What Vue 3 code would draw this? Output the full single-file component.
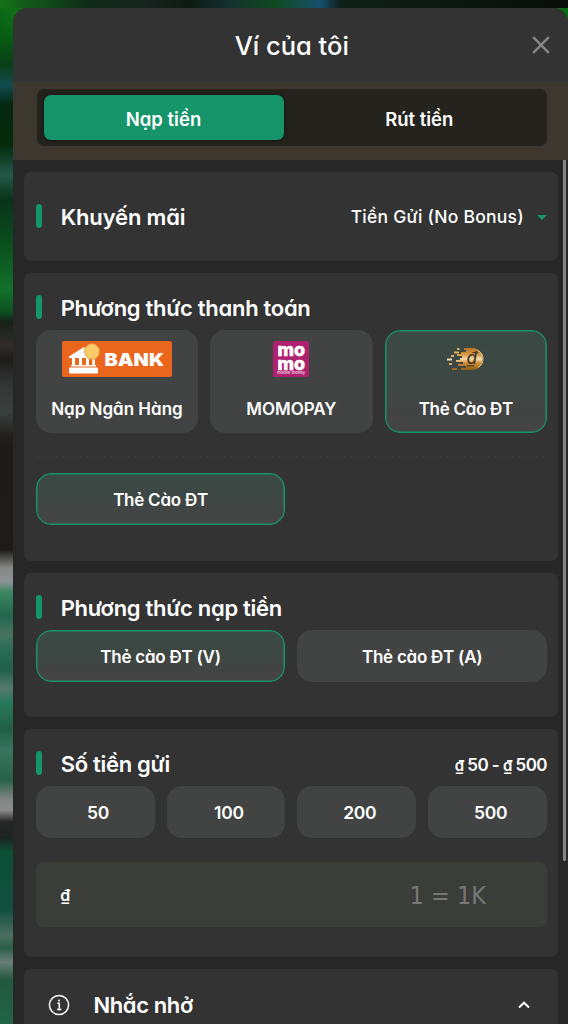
<template>
  <div class="page">
    <div class="wallet">
      <header class="wallet-header">
        <h1 class="wallet-title">Ví của tôi</h1>
        <button class="close-btn" aria-label="Đóng">
          <svg width="20" height="20" viewBox="0 0 20 20">
            <path d="M2.200 2.200L17.800 17.800M17.800 2.200L2.200 17.800" />
          </svg>
        </button>
      </header>

      <div class="tabs-wrap">
        <div class="tabs">
          <button
            v-for="tab in tabs"
            :key="tab"
            :class="['tab', { 'tab-active': tab === activeTab }]"
            @click="activeTab = tab"
          >
            <span>{{ tab }}</span>
          </button>
        </div>
      </div>

      <main class="wallet-body">
        <section class="card card-promo">
          <div class="card-head">
            <h2 class="card-title">Khuyến mãi</h2>
            <div class="promo-select">
              <span>Tiền Gửi (No Bonus)</span>
              <i class="caret"></i>
            </div>
          </div>
        </section>

        <section class="card card-payment">
          <div class="card-head">
            <h2 class="card-title">Phương thức thanh toán</h2>
          </div>
          <div class="grid grid-3">
            <button
              v-for="method in methods"
              :key="method.id"
              :class="['option', 'method', { 'option-active': method.id === activeMethod }]"
              @click="activeMethod = method.id"
            >
              <svg v-if="method.id === 'bank'" class="logo" width="110" height="36" viewBox="0 0 110 36">
                <rect width="110" height="36" rx="2" fill="#e9661c" />
                <g fill="#fff">
                  <path d="M7 15.500L22 6L31 15.500V17H7Z" />
                  <rect x="10" y="17" width="3" height="8" />
                  <rect x="17" y="17" width="3" height="8" />
                  <rect x="24" y="17" width="3" height="8" />
                  <rect x="30.300" y="17" width="2.600" height="8" />
                  <rect x="9" y="24" width="25" height="1.500" />
                  <rect x="7" y="26.500" width="29" height="6" rx="1" />
                </g>
                <ellipse cx="30" cy="10.500" rx="7.500" ry="7.800" fill="#fccb6c" stroke="#e5953a" stroke-width="0.800" />
                <text class="logo-bank" x="42.500" y="25.300" textLength="59.500" lengthAdjust="spacingAndGlyphs">BANK</text>
              </svg>

              <svg v-else-if="method.id === 'momo'" class="logo" width="36" height="36" viewBox="0 0 36 36">
                <rect width="36" height="36" rx="2.500" fill="#ae2070" />
                <text class="logo-momo" x="4.500" y="15.200" textLength="27.500" lengthAdjust="spacingAndGlyphs">mo</text>
                <text class="logo-momo" x="4.500" y="28.600" textLength="27.500" lengthAdjust="spacingAndGlyphs">mo</text>
                <text class="logo-momo-sub" x="4" y="33.200" textLength="28" lengthAdjust="spacingAndGlyphs">mobile money</text>
              </svg>

              <svg v-else class="logo" width="38" height="36" viewBox="0 0 38 36">
                <defs>
                  <linearGradient id="coin" x1="0" y1="0" x2="0" y2="1">
                    <stop offset="0" stop-color="#b87224" />
                    <stop offset="0.300" stop-color="#d99a47" />
                    <stop offset="0.500" stop-color="#f6dcae" />
                    <stop offset="0.680" stop-color="#d18d35" />
                    <stop offset="1" stop-color="#8f5c18" />
                  </linearGradient>
                </defs>
                <path
                  fill="url(#coin)"
                  d="M17 7H27A10.500 11.200 0 0 1 27 29H14V27H19V25H11V23H16V21H9V19H13V17H15V15H10V13H14V11H19V9H17Z"
                />
                <g fill="#e0ab62">
                  <rect x="10" y="7" width="2.500" height="2" />
                  <rect x="7" y="10.500" width="5" height="2" />
                  <rect x="4" y="14" width="3" height="2" />
                  <rect x="0" y="17.500" width="5" height="2" fill="#f6dcae" />
                  <rect x="2" y="22" width="3" height="2" />
                  <rect x="5" y="27" width="5" height="2" fill="#a66b20" />
                </g>
                <path d="M31 9.500A9 9.500 0 0 1 31 26.500" fill="none" stroke="#efc27e" stroke-width="1" />
                <text class="logo-coin" x="19.500" y="22.500">đ</text>
                <path d="M20 24.800H27" stroke="#453a29" stroke-width="1.200" />
              </svg>
              <span class="method-name">{{ method.name }}</span>
            </button>
          </div>
          <div class="divider"></div>
          <div class="grid grid-2">
            <button class="option option-active"><span>Thẻ Cào ĐT</span></button>
          </div>
        </section>

        <section class="card card-deposit">
          <div class="card-head">
            <h2 class="card-title">Phương thức nạp tiền</h2>
          </div>
          <div class="grid grid-2">
            <button
              v-for="channel in channels"
              :key="channel"
              :class="['option', { 'option-active': channel === activeChannel }]"
              @click="activeChannel = channel"
            >
              <span>{{ channel }}</span>
            </button>
          </div>
        </section>

        <section class="card card-amount">
          <div class="card-head">
            <h2 class="card-title">Số tiền gửi</h2>
            <span class="range"><small>₫</small> 50 - <small>₫</small> 500</span>
          </div>
          <div class="grid grid-4">
            <button v-for="value in amounts" :key="value" class="option amount" @click="amount = value">
              <span>{{ value }}</span>
            </button>
          </div>
          <label class="amount-field">
            <span class="currency">₫</span>
            <input v-model="amount" class="amount-input" type="text" placeholder="1 = 1K" />
          </label>
        </section>

        <section class="card card-note">
          <svg class="info" width="22" height="22" viewBox="0 0 22 22">
            <circle cx="11" cy="11" r="9.600" />
            <path d="M9.300 9.300H11.300V15.300M9 15.500H13.400" />
            <circle class="info-dot" cx="11" cy="6.400" r="1" />
          </svg>
          <h2 class="note-title">Nhắc nhở</h2>
          <svg class="chevron" width="14" height="10" viewBox="0 0 14 10">
            <path d="M2 7.500L7 2.700L12 7.500" />
          </svg>
        </section>
      </main>

      <div class="scrollbar"></div>
    </div>
  </div>
</template>

<script setup>
import { ref } from 'vue';

const tabs = ['Nạp tiền', 'Rút tiền'];
const activeTab = ref('Nạp tiền');

const methods = [
  { id: 'bank', name: 'Nạp Ngân Hàng' },
  { id: 'momo', name: 'MOMOPAY' },
  { id: 'card', name: 'Thẻ Cào ĐT' }
];
const activeMethod = ref('card');

const channels = ['Thẻ cào ĐT (V)', 'Thẻ cào ĐT (A)'];
const activeChannel = ref('Thẻ cào ĐT (V)');

const amounts = [50, 100, 200, 500];
const amount = ref('');
</script>

<style>
body {
  margin: 0;
  overflow: hidden;
  background: #0d1712;
}
</style>

<style scoped>
* {
  box-sizing: border-box;
}

.page {
  height: 1024px;
  overflow: hidden;
  padding: 8px 0 0 12.5px;
  font-family: Inter, "Noto Sans", sans-serif;
  font-feature-settings: "cv11";
  color: #fff;
  background:
    linear-gradient(90deg, #167019 0, #12501c 40px, #0f2a18 90px, #17241f 140px, #0e1a13 190px, #15302f 230px, #0f4a20 275px, #17506d 320px, #0f2019 340px, #0c1710 460px, #080c0a 100%) 0 0 / 100% 8px no-repeat,
    radial-gradient(circle at 25px 15px, #167019 0, transparent 24px),
    linear-gradient(180deg, #0c7018 0, #075a12 40px, #0a3f18 65px, #124b50 85px, #04270f 105px, #032b0c 145px, #235848 175px, #07341a 200px, #0a4c1d 240px, #12702a 290px, #0c4f20 312px, #172019 322px, #302c29 345px, #1d1d1c 360px, #343635 385px, #3a403e 412px, #22211f 435px, #1d1b19 450px, #1d1c19 550px, #888 568px, #8b9292 582px, #3c8763 592px, #23664f 615px, #477362 635px, #286b55 650px, #21604a 670px, #557a6e 688px, #28785c 702px, #216047 730px, #38745f 750px, #28614b 780px, #858686 800px, #8b8b8b 810px, #252625 822px, #1c2420 838px, #0b4f37 852px, #12503e 910px, #4b6e61 935px, #285f49 948px, #6a7e78 962px, #22583e 980px, #216447 1024px);
}

.wallet {
  position: relative;
  height: 1016px;
  display: flex;
  flex-direction: column;
  overflow: hidden;
  border-radius: 15px 15px 0 0;
  background: #272727;
}

.wallet-header {
  display: grid;
  grid-template-columns: 54px 1fr 54px;
  align-items: center;
  flex: none;
  height: 74px;
  background: #333;
}

.wallet-title {
  grid-column: 2;
  margin: 2px 0 0 3px;
  text-align: center;
  font-size: 25.5px;
  font-weight: 450;
  line-height: 32px;
}

button {
  border: 0;
  padding: 0;
  background: none;
  color: inherit;
  font: inherit;
  font-feature-settings: inherit;
}

.close-btn {
  display: flex;
  margin-left: 17px;
}

.close-btn path {
  fill: none;
  stroke: #858585;
  stroke-width: 2.5;
}

.tabs-wrap {
  flex: none;
  height: 78px;
  padding: 7px 21px 14px 24px;
  background: #3c382f;
}

.tabs {
  display: grid;
  grid-template-columns: 240px 1fr;
  height: 57px;
  padding: 6px 7px;
  border-radius: 7px;
  background: #25231e;
}

.tab {
  font-size: 18.5px;
  font-weight: 560;
  line-height: 24px;
  padding-top: 3px;
  border-radius: 7px;
}

.tab:last-child {
  padding-left: 15px;
}

.tab-active {
  background: #16946a;
  box-shadow: 0 0 4px rgba(0, 0, 0, 0.5);
}

.wallet-body {
  display: flex;
  flex-direction: column;
  gap: 12px;
  padding: 12px 10px 0 11.5px;
}

.card {
  flex: none;
  padding: 12px 11px 0 11.7px;
  border-radius: 7px;
  background: #333;
}

.card-promo {
  height: 89px;
  padding-top: 21.5px;
}

.card-payment {
  height: 288px;
}

.card-deposit {
  height: 144px;
}

.card-amount {
  height: 228px;
}

.card-head {
  display: flex;
  align-items: center;
  height: 45px;
}

.card-head::before {
  content: "";
  width: 6px;
  height: 24px;
  margin-top: -1px;
  border-radius: 3px;
  background: #16946a;
}

.card-title {
  flex: 1;
  margin: 1px 0 0 19px;
  font-size: 22px;
  font-weight: 600;
  line-height: 28px;
  letter-spacing: -0.3px;
  white-space: nowrap;
}

.card-promo .card-title {
  letter-spacing: -0.15px;
}

.promo-select {
  display: flex;
  align-items: center;
  gap: 13px;
  padding-top: 2px;
  font-size: 17.5px;
  font-weight: 450;
  line-height: 24px;
  letter-spacing: 0.25px;
}

.caret {
  border: 5px solid transparent;
  border-top-color: #16946a;
  border-bottom: 0;
}

.grid {
  display: grid;
  gap: 12px;
}

.grid-2 {
  grid-template-columns: repeat(2, 1fr);
}

.grid-3 {
  grid-template-columns: repeat(3, 1fr);
}

.grid-4 {
  grid-template-columns: repeat(4, 1fr);
}

.option {
  height: 52px;
  padding-top: 2px;
  border: 1px solid transparent;
  border-radius: 15px;
  background: #424443;
  background-clip: border-box;
  font-size: 17px;
  font-weight: 580;
  line-height: 22px;
  letter-spacing: -0.25px;
  white-space: nowrap;
}

.option-active {
  border-color: #16946a;
  background: linear-gradient(180deg, #3a4943 0, #3d4844 40%, #424443 80%, #444 100%);
  box-shadow: inset 0 0 0 0.5px #16946a;
}

.method {
  display: flex;
  flex-direction: column;
  align-items: center;
  height: 103px;
  padding-top: 10px;
  letter-spacing: 0;
}

.method.option-active {
  letter-spacing: -0.3px;
}

.method-name {
  margin-top: 21px;
}

.logo {
  flex: none;
  letter-spacing: 0;
}

.logo-bank {
  fill: #fff;
  font-size: 18px;
  font-weight: 900;
}

.logo-momo {
  fill: #fff;
  stroke: #fff;
  stroke-width: 0.6;
  font-size: 18px;
  font-weight: 800;
}

.logo-momo-sub {
  fill: #e9bfd7;
  font-size: 4px;
  font-weight: 700;
}

.logo-coin {
  fill: #453a29;
  font-size: 17px;
  font-style: italic;
  font-weight: 500;
}

.divider {
  height: 40px;
  background: radial-gradient(circle, #383838 0.7px, transparent 1px) 0 22px / 6px 4px repeat-x;
}

.range {
  padding-top: 3px;
  font-size: 17px;
  font-weight: 600;
  line-height: 24px;
  letter-spacing: -0.55px;
}

.range small {
  font-size: 15px;
}

.amount {
  padding-left: 6px;
  font-size: 17.5px;
  font-weight: 600;
}

.amount-field {
  display: flex;
  align-items: center;
  height: 65px;
  margin-top: 24px;
  padding: 0 61px 0 24.5px;
  border-radius: 7px;
  background: #3b3d39;
}

.currency {
  font-size: 16px;
  font-weight: 600;
}

.amount-input {
  flex: 1;
  min-width: 0;
  padding: 3px 0 0;
  border: 0;
  outline: 0;
  background: none;
  color: #fff;
  font: 400 25px/32px "DejaVu Sans Condensed", "DejaVu Sans", sans-serif;
  text-align: right;
}

.amount-input::placeholder {
  color: #777;
}

.card-note {
  display: flex;
  align-items: center;
  height: 90px;
  padding: 0 27px 18px 24px;
}

.info {
  fill: none;
  stroke: #fff;
  stroke-width: 1.5;
}

.info-dot {
  fill: #fff;
  stroke: none;
}

.note-title {
  flex: 1;
  margin: 0 0 0 23.5px;
  font-size: 22px;
  font-weight: 600;
  line-height: 28px;
  letter-spacing: -0.4px;
}

.chevron path {
  fill: none;
  stroke: #fff;
  stroke-width: 2;
}

/* overlay scrollbar of the scrolling body */
.scrollbar {
  position: absolute;
  top: 152px;
  right: 2px;
  width: 3px;
  height: 701px;
  border-radius: 0 0 2px 2px;
  background: #858585;
}
</style>
